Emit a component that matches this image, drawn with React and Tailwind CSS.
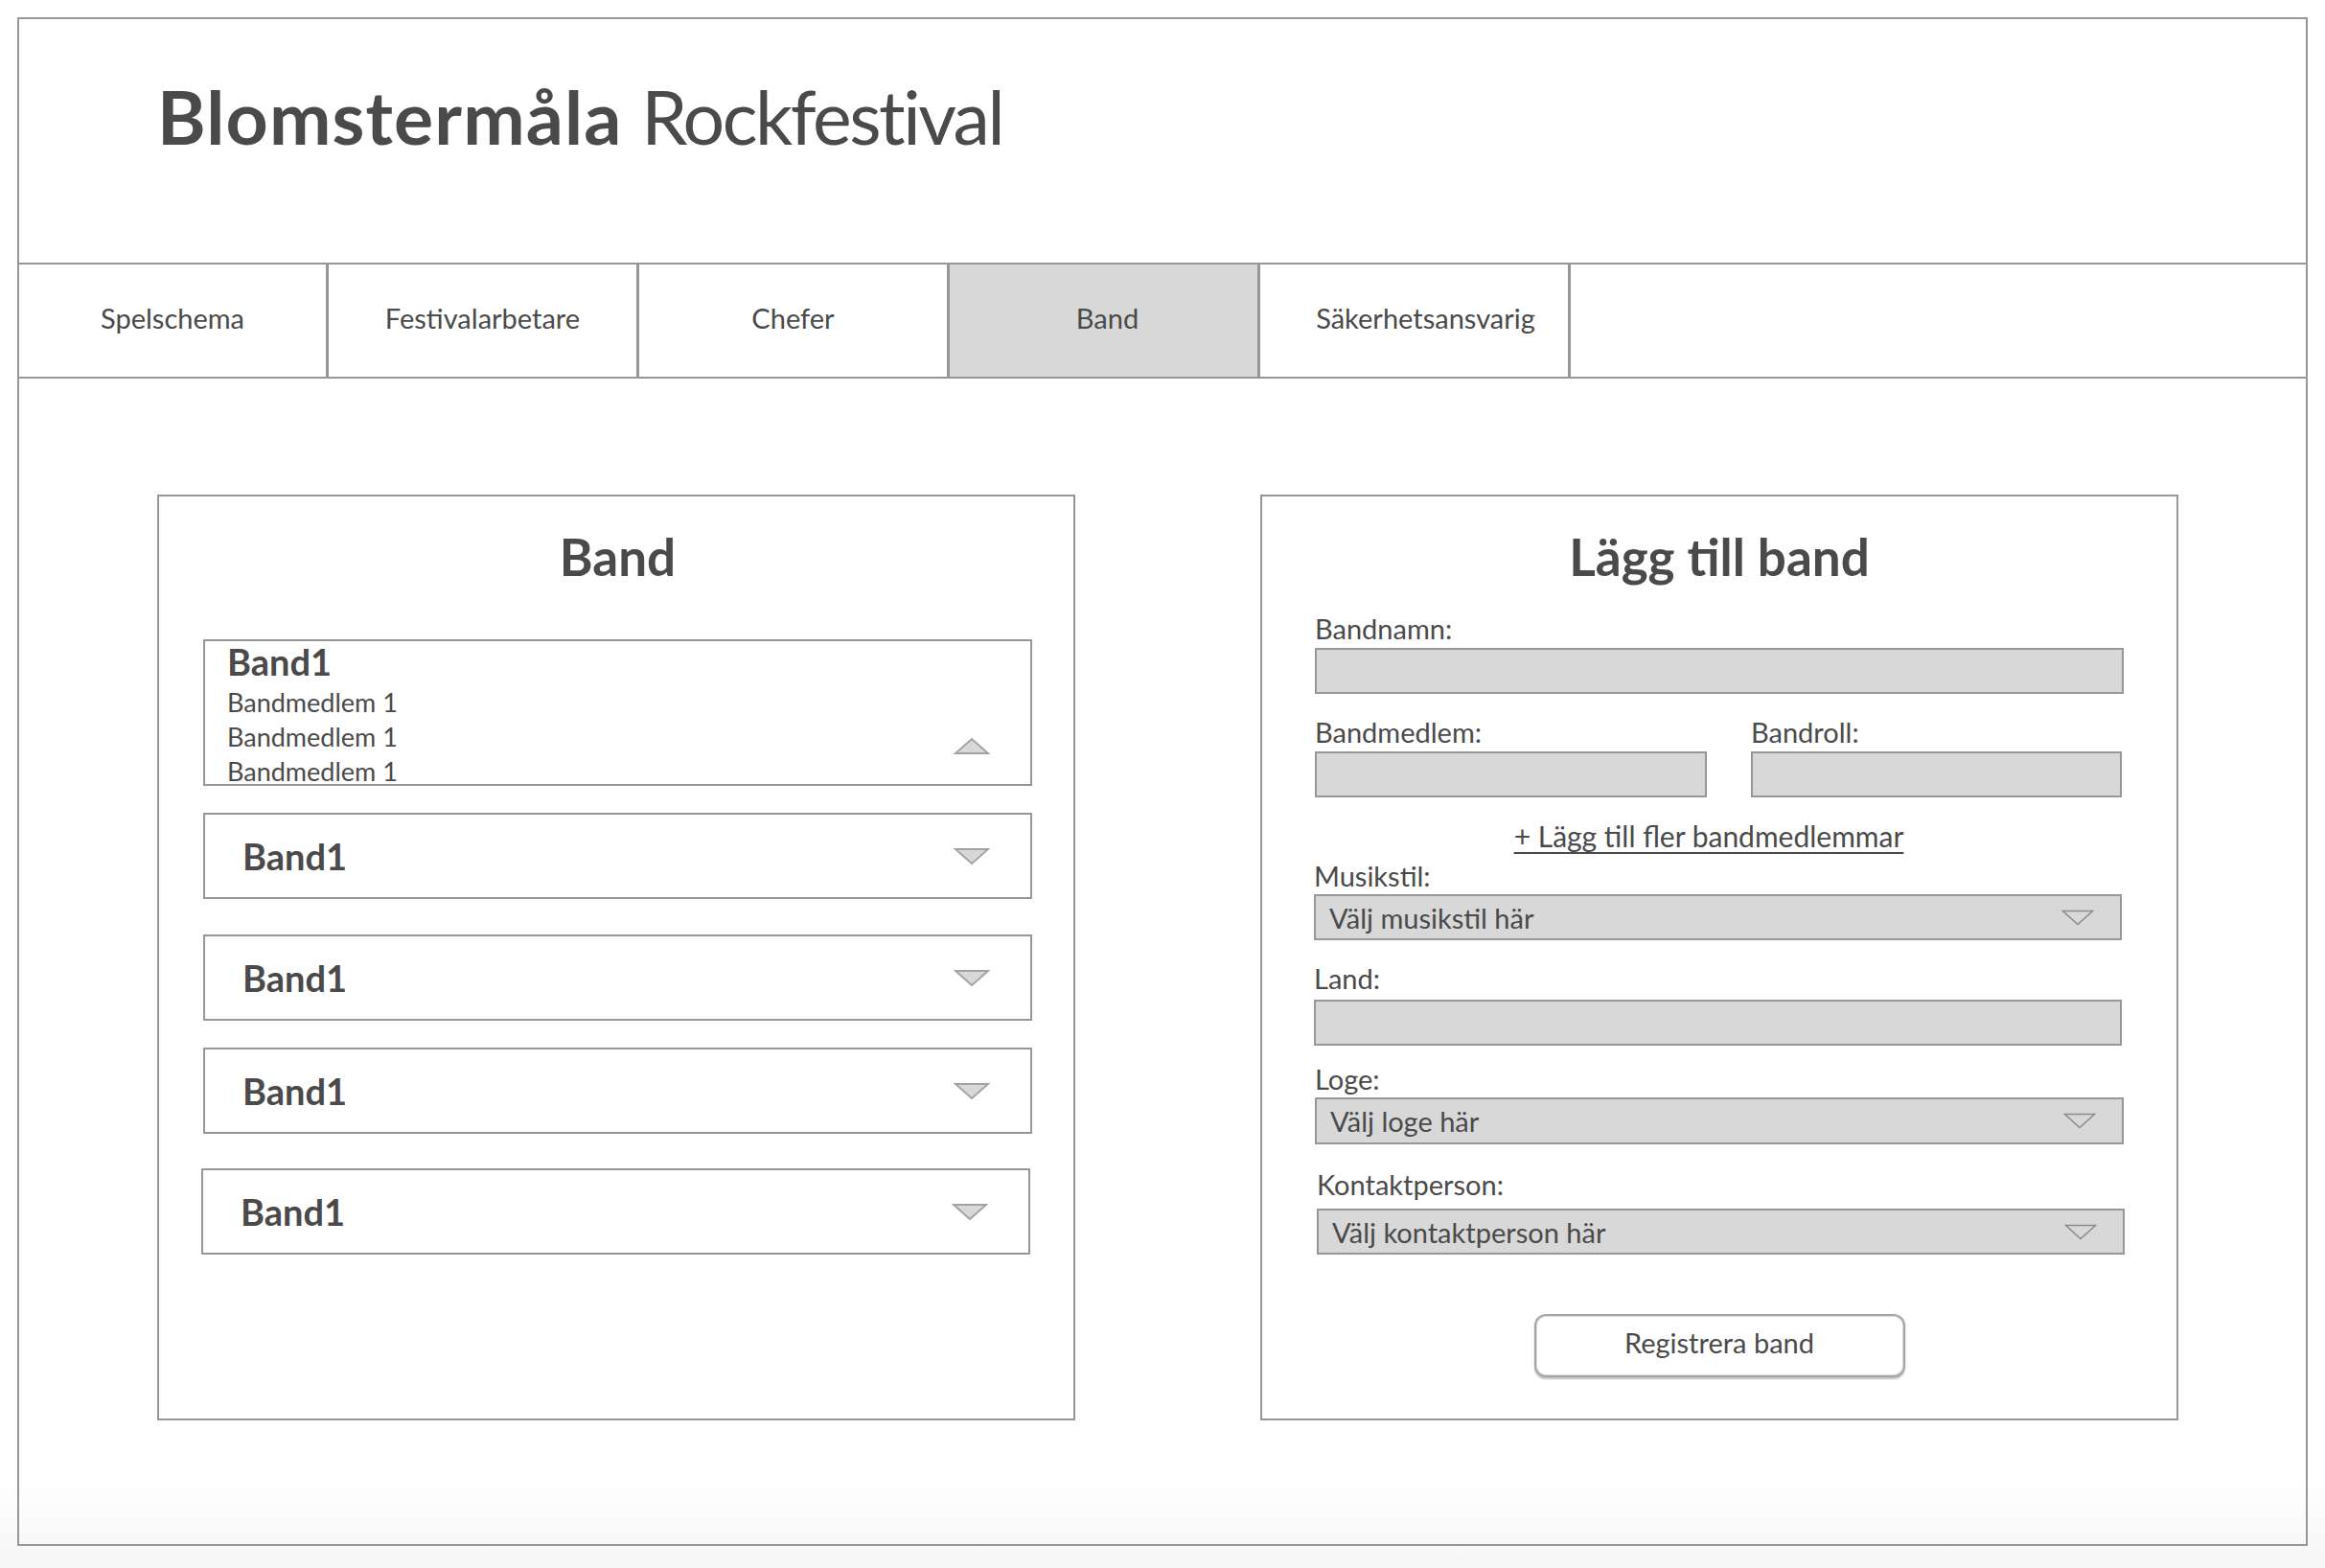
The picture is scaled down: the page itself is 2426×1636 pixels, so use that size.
import React from "react";

const font = { fontFamily: "Lato, 'Open Sans', sans-serif" };

function TriDown({ className = "" }) {
  return (
    <svg width="38" height="19" viewBox="0 0 38 19" className={className}>
      <polygon points="2,2 36,2 19,17" fill="#d8d8d8" stroke="#a3a3a3" strokeWidth="2" strokeLinejoin="miter" />
    </svg>
  );
}

function TriUp({ className = "" }) {
  return (
    <svg width="38" height="19" viewBox="0 0 38 19" className={className}>
      <polygon points="2,17 36,17 19,2" fill="#d8d8d8" stroke="#a3a3a3" strokeWidth="2" />
    </svg>
  );
}

function SelectTri() {
  return (
    <svg width="34" height="17" viewBox="0 0 34 17">
      <polygon points="1.5,1.5 32.5,1.5 17,15.5" fill="none" stroke="#8c8c8c" strokeWidth="1.5" />
    </svg>
  );
}

function CollapsedItem({ className = "" }) {
  return (
    <div className={"flex h-[90px] w-[865px] items-center justify-between border-2 border-[#979797] pl-[39px] pr-[42px] " + className}>
      <span className="text-[38px] leading-none font-bold text-[#4a4a4a]">Band1</span>
      <TriDown />
    </div>
  );
}

function Label({ children, className = "" }) {
  return <div className={"h-[34px] text-[29px] leading-[34px] text-[#4a4a4a] " + className}>{children}</div>;
}

function Input({ className = "" }) {
  return <div className={"h-[48px] border-2 border-[#979797] bg-[#d8d8d8] " + className} />;
}

function Select({ text, className = "" }) {
  return (
    <div className={"flex h-[48px] items-center justify-between border-2 border-[#979797] bg-[#d8d8d8] pl-[14px] pr-[27px] " + className}>
      <span className="text-[29px] leading-none text-[#4a4a4a]">{text}</span>
      <SelectTri />
    </div>
  );
}

export default function App() {
  const tabs = [
    { t: "Spelschema", c: "w-[323px]" },
    { t: "Festivalarbetare", c: "w-[324px]" },
    { t: "Chefer", c: "w-[324px]" },
    { t: "Band", c: "w-[324px] bg-[#d8d8d8] pl-[8px]" },
    { t: "Säkerhetsansvarig", c: "w-[324px] pl-[24px]" },
  ];
  return (
    <div style={font} className="h-[1636px] w-[2426px] bg-linear-to-b from-white from-94% to-[#f6f6f6] pt-[18px] pl-[18px] text-[#4a4a4a]">
      <div className="flex h-[1595px] w-[2390px] flex-col border-2 border-[#979797]">
        {/* Header */}
        <div className="h-[256px] shrink-0 border-b-2 border-[#979797] pt-[63px] pl-[144px]">
          <h1 className="text-[77px] leading-none text-[#4a4a4a]">
            <span className="font-bold tracking-[0.015em]">Blomstermåla</span>{" "}
            <span className="font-normal tracking-[-0.032em]">Rockfestival</span>
          </h1>
        </div>
        {/* Nav */}
        <div className="flex h-[119px] shrink-0 border-b-2 border-[#979797]">
          {tabs.map(({ t, c }) => (
            <div
              key={t}
              className={
                "flex h-full items-center justify-center border-r-[3px] border-[#979797] pb-[6px] text-[29px] text-[#4a4a4a] " + c
              }
            >
              {t}
            </div>
          ))}
        </div>
        {/* Main */}
        <div className="flex flex-1 items-start pt-[121px] pl-[144px]">
          {/* Left panel */}
          <div className="h-[966px] w-[958px] border-2 border-[#979797] pl-[46px]">
            <h2 className="mt-[36px] w-[865px] text-center text-[53px] leading-none font-bold">Band</h2>
            <div className="mt-[60px] flex h-[153px] w-[865px] items-end justify-between overflow-hidden border-2 border-[#979797] pr-[42px] pl-[23px]">
              <div className="self-start pt-[2px]">
                <div className="text-[38px] leading-none font-bold">Band1</div>
                <div className="mt-[6px] text-[27px] leading-[36px]">Bandmedlem 1</div>
                <div className="text-[27px] leading-[36px]">Bandmedlem 1</div>
                <div className="text-[27px] leading-[36px]">Bandmedlem 1</div>
              </div>
              <TriUp className="mb-[30px]" />
            </div>
            <CollapsedItem className="mt-[28px]" />
            <CollapsedItem className="mt-[37px]" />
            <CollapsedItem className="mt-[28px]" />
            <CollapsedItem className="-ml-[2px] mt-[36px]" />
          </div>
          {/* Right panel */}
          <div className="ml-[193px] h-[966px] w-[958px] border-2 border-[#979797] pl-[55px]">
            <h2 className="mt-[36px] w-[844px] text-center text-[53px] leading-none font-bold">Lägg till band</h2>
            <Label className="mt-[32px]">Bandnamn:</Label>
            <Input className="mt-[3px] w-[844px]" />
            <div className="mt-[23px] flex">
              <div className="w-[455px]">
                <Label>Bandmedlem:</Label>
                <Input className="mt-[3px] w-[409px]" />
              </div>
              <div>
                <Label>Bandroll:</Label>
                <Input className="mt-[3px] w-[387px]" />
              </div>
            </div>
            <div className="mt-[23px] flex w-[844px] justify-center pr-[22px]">
              <span className="text-[30px] leading-[34px] underline decoration-[2px] underline-offset-[5px]">+ Lägg till fler bandmedlemmar</span>
            </div>
            <Label className="-ml-[1px] mt-[8px]">Musikstil:</Label>
            <Select className="-ml-[1px] mt-[2px] w-[843px]" text="Välj musikstil här" />
            <Label className="-ml-[1px] mt-[23px]">Land:</Label>
            <Input className="-ml-[1px] mt-[5px] w-[843px]" />
            <Label className="mt-[18px]">Loge:</Label>
            <Select className="mt-[2px] h-[49px] w-[844px]" text="Välj loge här" />
            <Label className="ml-[2px] mt-[25px]">Kontaktperson:</Label>
            <Select className="ml-[2px] mt-[8px] w-[843px]" text="Välj kontaktperson här" />
            <div className="mt-[62px] flex w-[844px] justify-center">
              <button className="flex h-[66px] w-[387px] items-center justify-center rounded-[12px] border-2 border-[#a6a6a6] bg-white pb-[6px] text-[29px] text-[#4a4a4a] shadow-[0_2px_2px_rgba(0,0,0,0.25),inset_0_0_0_1px_#dcdcdc]">
                Registrera band
              </button>
            </div>
          </div>
        </div>
      </div>
    </div>
  );
}
